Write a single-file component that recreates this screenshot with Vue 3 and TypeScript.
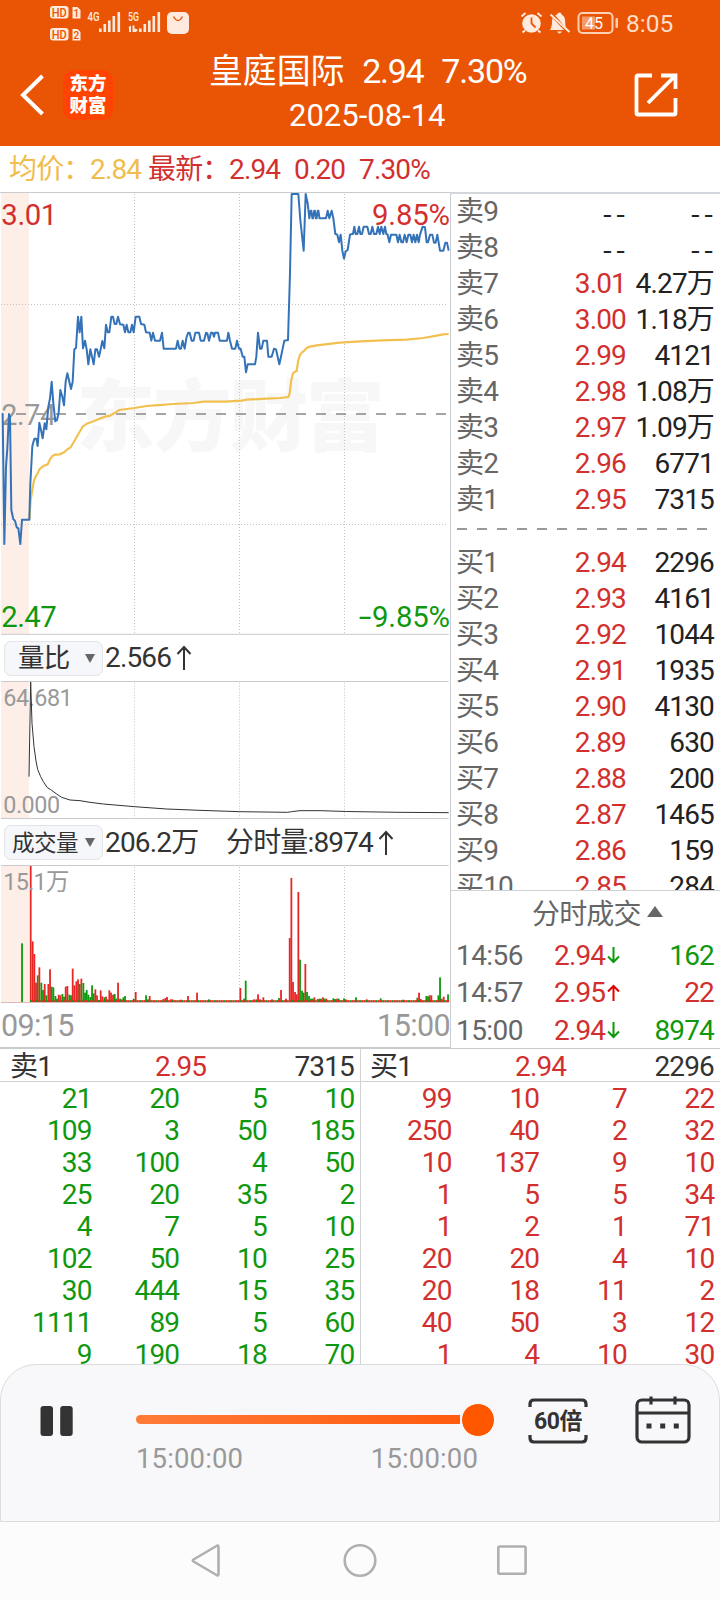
<script setup lang="ts">
type Quote = { label: string; price: string; volume: string }
type Bar = { x: number; h: number; c: string }

const RED = '#e82625'
const GREEN = '#0b9a0b'

const sells: Quote[] = [
  { label: '卖9', price: '--', volume: '--' },
  { label: '卖8', price: '--', volume: '--' },
  { label: '卖7', price: '3.01', volume: '4.27万' },
  { label: '卖6', price: '3.00', volume: '1.18万' },
  { label: '卖5', price: '2.99', volume: '4121' },
  { label: '卖4', price: '2.98', volume: '1.08万' },
  { label: '卖3', price: '2.97', volume: '1.09万' },
  { label: '卖2', price: '2.96', volume: '6771' },
  { label: '卖1', price: '2.95', volume: '7315' },
]
const buys: Quote[] = [
  { label: '买1', price: '2.94', volume: '2296' },
  { label: '买2', price: '2.93', volume: '4161' },
  { label: '买3', price: '2.92', volume: '1044' },
  { label: '买4', price: '2.91', volume: '1935' },
  { label: '买5', price: '2.90', volume: '4130' },
  { label: '买6', price: '2.89', volume: '630' },
  { label: '买7', price: '2.88', volume: '200' },
  { label: '买8', price: '2.87', volume: '1465' },
  { label: '买9', price: '2.86', volume: '159' },
  { label: '买10', price: '2.85', volume: '284' },
]
const ticks = [
  { time: '14:56', price: '2.94', up: false, vol: '162' },
  { time: '14:57', price: '2.95', up: true, vol: '22' },
  { time: '15:00', price: '2.94', up: false, vol: '8974' },
]
const queues = [
  {
    label: '卖1', price: '2.95', volume: '7315', tone: 'green',
    cells: [21, 20, 5, 10, 109, 3, 50, 185, 33, 100, 4, 50, 25, 20, 35, 2, 4, 7, 5, 10, 102, 50, 10, 25, 30, 444, 15, 35, 1111, 89, 5, 60, 9, 190, 18, 70],
  },
  {
    label: '买1', price: '2.94', volume: '2296', tone: 'red',
    cells: [99, 10, 7, 22, 250, 40, 2, 32, 10, 137, 9, 10, 1, 5, 5, 34, 1, 2, 1, 71, 20, 20, 4, 10, 20, 18, 11, 2, 40, 50, 3, 12, 1, 4, 10, 30],
  },
]

// Zigzag between two levels, used where the price flickers by one tick.
function flicker(from: number, to: number, hi: number, lo: number, step: number): string {
  const out: string[] = []
  let up = false
  for (let x = from; x <= to; x += step) {
    out.push(`${x},${up ? hi : lo}`, `${x + 2},${up ? hi : lo}`)
    up = !up
  }
  return out.join(' ')
}

const priceLine = [
  '5,672 8,672 13,1062 18,830 22,775 27,672 30,680 34,960 40,988 45,992 50,1012 55,1015 61,1062 66,989 88,989 91,880 97,768 103,746 109,746 113,768 118,698 123,720 128,745 134,700 139,718 145,650 150,625 155,575 160,640 166,694 171,690 176,668 181,600 187,620 192,646 197,575 202,550 208,575 213,597 218,575 223,478 228,474 234,380 239,427 244,380 249,475 255,452 260,478 265,523 271,478 276,500 281,523 286,478 291,478 297,500 302,478 307,453 313,475 318,404 323,427 328,427 334,380 339,380 344,402 349,402 354,380 360,403 370,404 375,427 380,404 385,427 391,427 396,404 401,427 407,380 418,380 423,402 433,404 438,427 449,428 454,452 459,428 465,452 480,452 486,428 491,476 528,476 533,452 538,476 543,476 548,452 554,476 560,440 565,428 569,428 575,452 581,452 586,428 597,428 602,452 612,452 618,428 622,430 627,452 633,428 638,428 642,440 645,428 654,428 659,452',
  '675,452 681,452 685,428 690,452 696,476 706,476 711,452 717,476 722,476 728,500 733,500 738,547 743,523 765,523 769,500 774,428 780,476 785,476 790,452 801,452 805,500 815,500 822,476 828,478 833,500 838,523 843,500 853,452 864,450 870,250 875,12 895,12 901,90 911,182 917,12 923,40 928,85',
  flicker(932, 960, 85, 62, 5.3),
  '965,85 978,85 983,62 988,85 995,62 1000,85 1006,132 1012,134 1017,157 1022,134 1027,182 1032,206 1037,184 1043,180 1050,134 1056,132',
  '1059,132 1063,110 1067,132 1072,132 1077,110 1081,132 1086,132 1091,110 1102,110 1107,132 1112,132 1117,110 1122,132 1129,132 1134,110 1139,132 1144,110 1150,132 1155,110 1159,132',
  '1163,134 1168,157 1173,134',
  '1189,134 1194,157 1199,134 1204,157 1209,157 1214,134 1220,157 1225,134 1231,134 1236,157 1241,134 1246,157 1251,134 1256,157',
  '1260,134 1268,110 1275,112 1280,157 1284,157 1290,134 1297,134 1302,158 1307,158 1312,134 1320,182 1330,182 1336,158 1341,158 1346,182',
].join(' ')

const avgLine =
  '88,990 92,930 97,900 102,872 108,858 113,850 118,838 130,828 143,823 150,808 157,798 165,794 180,793 192,787 202,778 212,772 225,750 235,732 248,710 260,701 275,696 295,688 315,680 330,677 345,668 358,660 380,657 403,654 440,648 465,646 520,642 580,639 610,635 675,635 725,632 740,629 800,626 840,624 865,621 869,610 874,570 879,550 885,545 890,543 895,510 900,495 905,488 912,483 920,474 930,470 950,466 975,463 1020,458 1080,454 1145,451 1220,449 1270,444 1310,437 1330,433 1346,432'

const volumeText =
  '66:176g 92:408r 98:182r 103:144r 108:58r 113:80g 118:104r 124:58g 129:36g 134:54r 139:20g 145:54r 150:98r 155:46g 160:44g 166:18g 171:10g 176:22r 181:20r 187:24g 192:16g 197:46r 202:48r 208:22g 213:20g 218:100r 223:50r 229:62r 234:68r 239:54g 244:70r 250:57g 255:28g 260:36g 265:22g 271:15g 276:50g 281:26g 286:38r 291:20r 297:6g 302:35r 307:17r 313:14g 318:16r 323:8g 328:35r 333:28r 339:22r 344:24g 349:10g 354:58r 360:10g 365:8r 370:14g 375:18g 401:10g 407:30r 438:20g 444:8g 449:18r 490:9r 496:12r 501:15r 512:8r 517:8r 543:7r 564:18r 591:28r 627:8g 721:42r 732:10g 737:64g 762:8r 769:8r 774:23r 780:8r 790:14r 816:8r 837:12g 843:36r 858:10r 869:192r 874:372r 879:60r 885:30r 890:23r 895:330r 900:127g 906:34g 911:28g 916:114r 921:30g 927:18g 933:10g 938:10g 943:14r 953:9g 958:10r 963:10g 969:14r 974:10g 979:10r 1000:11g 1005:9g 1011:10r 1016:10g 1032:11g 1037:8r 1068:14g 1100:8r 1142:11g 1210:7r 1252:13g 1257:28r 1262:9r 1279:18g 1284:17g 1289:20r 1294:20r 1315:20g 1320:74g 1325:10r 1331:16r 1344:23g'
const bars: Bar[] = volumeText.split(' ').map((s) => {
  const [x, rest] = s.split(':')
  return { x: Number(x), h: parseInt(rest), c: rest.endsWith('r') ? RED : GREEN }
})
for (let i = 0; i < 240; i++) {
  bars.push({ x: 92.5 + i * 5.24, h: 5.5, c: i % 3 === 0 ? GREEN : RED })
}
const verticals = [403.5, 718.5, 1033.5]
</script>

<template>
  <div class="screen">
    <header class="top">
      <div class="status">
        <svg class="status-left" width="150" height="36" viewBox="0 0 150 36">
          <g fill="#ffeadd">
            <rect x="0" y="0" width="18.500" height="12.500" rx="3" /><path d="M22.500 1h5l3 3v8.500h-8z" />
            <rect x="0" y="22" width="18.500" height="12.500" rx="3" /><path d="M22.500 23h5l3 3v8.500h-8z" />
            <path d="M49 22.500h2.600V26H49zM53.500 18h2.600v8h-2.600zM58 14.500h2.600V26H58zM62.500 10h2.600v16h-2.600zM67.500 6h2.600v20h-2.600z" />
            <path d="M89 22.500h2.600V26H89zM93.500 18h2.600v8h-2.600zM98 14.500h2.600V26H98zM102.500 10h2.600v16h-2.600zM107.500 6h2.600v20h-2.600z" />
            <path d="M78 21.500l3-2v6.500h-2v-4.500zM82.500 19.500h2v3l3 1v1.500l-2 1h-3z" />
            <rect x="117" y="6" width="22" height="22" rx="5" />
            <text x="37.500" y="14.500" font-size="12.500" textLength="12" lengthAdjust="spacingAndGlyphs" font-weight="500">4G</text>
            <text x="78" y="14.500" font-size="12.500" textLength="11" lengthAdjust="spacingAndGlyphs" font-weight="500">5G</text>
          </g>
          <g fill="#e95504" font-size="12" font-weight="500">
            <text x="1.800" y="10.600" textLength="15" lengthAdjust="spacingAndGlyphs">HD</text><text x="23.600" y="10.600" font-size="10">1</text>
            <text x="1.800" y="32.600" textLength="15" lengthAdjust="spacingAndGlyphs">HD</text><text x="23.600" y="32.600" font-size="10">2</text>
          </g>
          <path d="M123.500 10.500q4.500 8 9 0" fill="none" stroke="#e95504" stroke-width="1.300" />
        </svg>
        <svg class="status-right" width="100" height="26" viewBox="520 10 100 26">
          <circle cx="531.500" cy="23.500" r="9.300" fill="#ffeadd" />
          <path d="M531.500 17.500v6l4 4" fill="none" stroke="#e95504" stroke-width="1.800" />
          <path d="M521.500 16.500l4-3.500M541.500 16.500l-4-3.500M525 30.500l-2.500 2M538 30.500l2.500 2" stroke="#ffeadd" stroke-width="2" />
          <path d="M559.500 12.500c-1 0-2 .8-2 1.800l-2.300.9L566 28c-.6-2-.8-3.500-.8-6 0-4-1-6-3.700-7.500 0-1.200-1-2-2-2z M552.500 18c-.8 3.500 0 9-2.500 12h14zM557 31.500h5q-2.500 4-5 0z" fill="#ffeadd" />
          <path d="M550.500 14.500l19 17.500" stroke="#ffeadd" stroke-width="2" />
          <rect x="578.500" y="13" width="34" height="20" rx="4" fill="none" stroke="#ffcfb4" stroke-width="2" />
          <rect x="582" y="16.500" width="13" height="13" fill="#f79a68" />
          <rect x="615.500" y="18" width="2.500" height="10" rx="1" fill="#ffcfb4" />
          <text x="585" y="28.500" font-size="16.500" fill="#fff" textLength="18" lengthAdjust="spacingAndGlyphs">45</text>
        </svg>
        <span class="clock">8:05</span>
      </div>
      <div class="bar">
        <svg class="back" width="26" height="42" viewBox="0 0 26 42"><path d="M23.500 2L4 21l19.500 19" fill="none" stroke="#fff" stroke-width="4" /></svg>
        <div class="logo"><span>东方</span><span>财富</span></div>
        <div class="titles">
          <div class="name"><span>皇庭国际</span><span class="n1">2.94</span><span class="n2">7.30%</span></div>
          <div class="date">2025-08-14</div>
        </div>
        <svg class="share" width="44" height="44" viewBox="0 0 44 44">
          <g fill="none" stroke="#fff" stroke-width="3.800"><path d="M18 2.500H4Q2.500 2.500 2.500 4v36Q2.500 41.500 4 41.500h36q1.500 0 1.500-1.500V25" /><path d="M27 2.500h14.500V16M41 3L14 30" /></g>
        </svg>
      </div>
    </header>

    <div class="summary">
      <span class="yellow s1">均价：</span><span class="yellow s2">2.84</span>
      <span class="red s1">最新：</span><span class="red s3">2.94</span><span class="red s4">0.20</span><span class="red">7.30%</span>
    </div>

    <main class="market">
      <section class="charts">
        <svg width="450" height="443" viewBox="0 6 1350 1329">
          <rect x="3" y="9" width="84" height="1323" fill="#fdeee8" />
          <text class="mark" x="229" y="764" font-size="236" textLength="925">东方财富</text>
          <g class="dots">
            <path v-for="v in verticals" :key="v" :d="`M${v} 12V1332`" />
            <path d="M3 343.500H1342M3 1003.500H1342" />
          </g>
          <path d="M48 672H1346" stroke="#888" stroke-width="5" stroke-dasharray="30 30" />
          <text x="4" y="706" font-size="86" fill="#999" textLength="164">2.74</text>
          <polyline :points="avgLine" fill="none" stroke="#f2c04f" stroke-width="6.500" />
          <polyline :points="priceLine" fill="none" stroke="#3573b9" stroke-width="6" stroke-linejoin="round" />
          <path d="M0 7.500H1350M3 1333H1346" stroke="#c9cbcd" stroke-width="3" />
          <text x="4" y="104" font-size="88" fill="#d42f2f" textLength="168">3.01</text>
          <text x="1116" y="104" font-size="88" fill="#d42f2f" textLength="234">9.85%</text>
          <text x="4" y="1310" font-size="88" fill="#0f980f" textLength="166">2.47</text>
          <text x="1076" y="1310" font-size="88" fill="#0f980f"><tspan textLength="38" lengthAdjust="spacingAndGlyphs">-</tspan><tspan x="1116" textLength="234">9.85%</tspan></text>
        </svg>

        <div class="indicator">
          <div class="picker"><span class="wide">量比</span><i></i></div>
          <span>2.566</span>
          <svg class="arrow" width="16" height="26" viewBox="0 0 16 26"><path d="M8 25V2M1.500 9L8 2l6.500 7" fill="none" stroke="#333" stroke-width="2" /></svg>
        </div>

        <svg width="450" height="138" viewBox="0 153 1350 414">
          <rect x="3" y="156" width="84" height="408" fill="#fdeee8" />
          <g class="dots"><path v-for="v in verticals" :key="v" :d="`M${v} 158V564`" /></g>
          <path d="M3 154.500H1346M3 565.500H1346" stroke="#c9cbcd" stroke-width="3" />
          <text x="10" y="227" font-size="70" fill="#999" textLength="208">64.681</text>
          <text x="10" y="548" font-size="70" fill="#999" textLength="170">0.000</text>
          <path d="M87 440L92 156 96 280 102 350 108 393 113 418 122 440 130 455 142 473 152 479 170 492 185 502 210 510 240 512 270 517 310 522 403 530 500 537 600 541 718 545 862 547 875 545 900 542 960 542 1040 544.500 1200 547 1346 548" fill="none" stroke="#333" stroke-width="3" />
        </svg>

        <div class="indicator second">
          <div class="picker"><span class="tight">成交量</span><i></i></div>
          <span class="total">206.2万</span><span>分时量:8974</span>
          <svg class="arrow" width="16" height="26" viewBox="0 0 16 26"><path d="M8 25V2M1.500 9L8 2l6.500 7" fill="none" stroke="#333" stroke-width="2" /></svg>
        </div>

        <svg width="450" height="138" viewBox="0 30 1350 414">
          <rect x="3" y="33" width="84" height="408" fill="#fdeee8" />
          <g class="dots"><path v-for="v in verticals" :key="v" :d="`M${v} 36V440`" /></g>
          <path d="M3 31.500H1346" stroke="#c9cbcd" stroke-width="3" />
          <rect v-for="(b, i) in bars" :key="i" :x="b.x - 2.600" :y="441 - b.h" width="5.400" :height="b.h" :fill="b.c" />
          <path d="M3 442.500H1346" stroke="#c99" stroke-width="2" />
          <text x="10" y="104" font-size="70" fill="#999" textLength="198">15.1万</text>
        </svg>
        <div class="times"><span>09:15</span><span>15:00</span></div>
      </section>

      <aside class="book">
        <div class="ladder">
          <div v-for="q in sells" :key="q.label" class="quote" :class="{ empty: q.price === '--' }">
            <span>{{ q.label }}</span><b>{{ q.price }}</b><em>{{ q.volume }}</em>
          </div>
          <div class="split"></div>
          <div v-for="q in buys" :key="q.label" class="quote">
            <span>{{ q.label }}</span><b>{{ q.price }}</b><em>{{ q.volume }}</em>
          </div>
        </div>
        <div class="deals">
          <div class="deals-head">分时成交<i></i></div>
          <div v-for="t in ticks" :key="t.time" class="tick" :class="t.up ? 'up' : 'down'">
            <span>{{ t.time }}</span><b>{{ t.price }}</b>
            <svg width="13" height="18" viewBox="0 0 13 18">
              <path :d="t.up ? 'M6.500 17V2M1 7.500L6.500 2 12 7.500' : 'M6.500 0v15M1 9.500L6.500 15 12 9.500'" fill="none" :stroke="t.up ? '#e00000' : '#0b9a0b'" stroke-width="2" />
            </svg>
            <em>{{ t.vol }}</em>
          </div>
        </div>
      </aside>
    </main>

    <section class="queues">
      <div v-for="q in queues" :key="q.label" class="queue">
        <div class="queue-head"><span>{{ q.label }}</span><b>{{ q.price }}</b><em>{{ q.volume }}</em></div>
        <div class="cells" :class="q.tone"><span v-for="(c, i) in q.cells" :key="i">{{ c }}</span></div>
      </div>
    </section>

    <section class="player">
      <svg class="pause" width="34" height="30" viewBox="0 0 34 30"><rect x="0.500" width="12.500" height="30" rx="3" fill="#333" /><rect x="20.200" width="12.500" height="30" rx="3" fill="#333" /></svg>
      <div class="slider">
        <div class="track"><div class="knob"></div></div>
        <div class="range"><span>15:00:00</span><span>15:00:00</span></div>
      </div>
      <div class="speed">
        <svg width="60" height="46" viewBox="0 0 60 46"><path d="M2 9V6q0-4 4-4h48q4 0 4 4v3M2 37v3q0 4 4 4h48q4 0 4-4v-3" fill="none" stroke="#333" stroke-width="3.200" /></svg>
        <span>60倍</span>
      </div>
      <svg class="calendar" width="56" height="48" viewBox="0 0 56 48">
        <g fill="none" stroke="#333" stroke-width="3.200"><rect x="2" y="4" width="52" height="42" rx="5" /><path d="M2 17h52M16 0.500v8M40 0.500v8" /></g>
        <path d="M11.500 27.500h5v5h-5zM25.200 27.500h5v5h-5zM38.800 27.500h5v5h-5z" fill="#333" />
      </svg>
    </section>

    <nav class="nav">
      <svg width="340" height="36" viewBox="190 0 340 36">
        <g fill="none" stroke="#b0b0b0" stroke-width="2.600" stroke-linejoin="round">
          <path d="M193.500 16.500q-1.500 1 0 2l23 13.500q2 1 2-1V4q0-2-2-1z" />
          <circle cx="360" cy="17.500" r="15.300" />
          <rect x="498.300" y="3.500" width="27.300" height="27.300" rx="1.500" />
        </g>
      </svg>
    </nav>
  </div>
</template>

<style>
body { margin: 0; background: #fff; }
</style>

<style scoped>
.screen {
  width: 720px; height: 1600px; overflow: hidden; display: flex; flex-direction: column;
  background: #fff; color: #333;
  font-family: Roboto, "Noto Sans CJK SC", sans-serif;
  font-size: 28px; letter-spacing: -0.03em; line-height: 36px; white-space: nowrap;
}
.screen * { box-sizing: border-box; }
svg { display: block; flex: none; }
svg text { letter-spacing: 0; }
b, em, i { font-weight: 400; font-style: normal; }
.red { color: #d2302f; }
.green { color: #0f980f; }
.yellow { color: #f0bd4d; }

.top { height: 146px; background: #e95504; color: #fff; }
.status { height: 46px; display: flex; align-items: flex-start; padding-left: 50px; }
.status-left { margin-top: 6px; }
.status-right { margin: 10px 0 0 320px; }
.clock { margin: 6px 0 0 6px; font-size: 24.5px; color: #ffdcc8; letter-spacing: 0; }
.bar { height: 100px; display: flex; padding-left: 19px; }
.back { margin-top: 28px; }
.logo {
  width: 50px; height: 50px; margin: 24px 0 0 18px; border-radius: 11px; background: #ff4400;
  display: flex; flex-direction: column; align-items: center; justify-content: center;
  font-size: 18.500px; font-weight: 900; line-height: 22px; letter-spacing: 0;
}
.titles { width: 430px; display: flex; flex-direction: column; padding-left: 96px; }
.name { display: flex; font-size: 34px; line-height: 50px; letter-spacing: -0.005em; height: 51px; }
.n1 { margin-left: 18px; width: 79px; letter-spacing: -0.04em; }
.n2 { letter-spacing: -0.035em; }
.date { font-size: 31px; line-height: 38px; letter-spacing: 0; padding-left: 80px; }
.share { margin: 27px 0 0 91px; }

.summary { height: 46px; display: flex; align-items: center; padding: 2px 0 0 9px; line-height: 44px; }
.s1 { width: 81px; }
.s2 { width: 58px; }
.s3 { width: 65px; }
.s4 { width: 65px; }

.market { height: 856px; display: flex; }
.charts { width: 450px; display: flex; flex-direction: column; }
.mark { font-weight: 900; fill: #f7f7f7; }
.dots path { fill: none; stroke: #c4c4c4; stroke-width: 3; stroke-dasharray: 3 6; }
.indicator { height: 46px; display: flex; align-items: center; }
.second { padding-top: 1px; }
.picker {
  width: 99px; height: 35px; margin: 0 2px 0 4px; padding: 0 7px 0 7px; border: 1px solid #e2e4e8; border-radius: 7px;
  background: #f6f7fa; display: flex; align-items: center; justify-content: space-between;
}
.picker i { border: 5.500px solid transparent; border-top: 9px solid #666; border-bottom: 0; }
.wide { font-size: 26.500px; margin-left: 6px; }
.tight { font-size: 22.500px; letter-spacing: -0.02em; }
.arrow { margin-left: 5px; }
.total { width: 121px; }
.times { height: 45px; padding: 2px 0 0 1px; display: flex; justify-content: space-between; align-items: center; font-size: 30.500px; letter-spacing: -0.02em; color: #999; border-bottom: 1.500px solid #c9cbcd; }

.book { width: 270px; border-left: 1px solid #c9ccd0; border-top: 2px solid #d3d6dc; display: flex; flex-direction: column; }
.ladder { height: 697px; overflow: hidden; border-bottom: 1px solid #cfd1d3; }
.quote { height: 36px; display: grid; grid-template-columns: 80px 90px 1fr; padding: 0 6px 0 5px; color: #222; }
.quote span { color: #666; }
.quote b, .quote em { text-align: right; }
.quote b { color: #d2302f; }
.empty b { color: #222; }
.empty b, .empty em { font-family: "Noto Sans CJK SC", sans-serif; letter-spacing: 3.500px; margin-right: -3px; }
.split { height: 27px; margin: 0 13px 0 6px; background: repeating-linear-gradient(90deg, #999 0 10px, transparent 10px 20px) 0 10px / 100% 2px no-repeat; }
.deals { color: #666; }
.deals-head { height: 45px; padding-top: 3px; display: flex; align-items: center; padding-left: 81px; }
.deals-head i { margin: -6px 0 0 6px; border: 8px solid transparent; border-bottom: 11px solid #666; border-top: 0; }
.tick { height: 37.500px; display: grid; grid-template-columns: 98px 53px 14px 1fr; align-items: center; padding: 2px 6px 0 5px; }
.tick span { letter-spacing: -0.02em; }
.tick b { color: #d2302f; }
.tick em { text-align: right; }
.up em { color: #d2302f; }
.down em { color: #0f980f; }

.queues { height: 316px; display: flex; overflow: hidden; border-top: 1px solid #c9cbcd; }
.queue { width: 360px; }
.queue + .queue { box-shadow: inset 1px 0 #d0d2d4; }
.queue-head { height: 33px; line-height: 35px; border-bottom: 1px solid #cfd1d3; display: grid; grid-template-columns: 145px 100px 1fr; padding: 0 6px 0 10px; }
.queue-head b { color: #d2302f; }
.queue-head em { text-align: right; }
.cells { display: grid; grid-template-columns: repeat(4, 87.600px); padding-left: 4px; line-height: 32px; text-align: right; padding-top: 1px; }

.player {
  height: 158px; border: 1px solid #dcdcde; border-radius: 36px 36px 0 0; background: #f8f8fa;
  display: flex; align-items: flex-start; padding-left: 39px;
}
.pause { margin-top: 41px; }
.slider { width: 358px; margin: 50px 0 0 62px; }
.track { width: 324px; height: 9px; border-radius: 5px 0 0 5px; background: linear-gradient(90deg, #ff7a38, #ff5c0f); position: relative; }
.knob { position: absolute; right: -35px; top: -12px; width: 34px; height: 34px; border-radius: 50%; background: #ff5600; border: 1px solid #fff; }
.range { display: flex; justify-content: space-between; width: 342px; margin-top: 17px; font-size: 27.500px; color: #999; letter-spacing: 0.005em; }
.speed { margin: 33px 0 0 34px; display: grid; }
.speed > * { grid-area: 1 / 1; }
.speed span { font-size: 23px; font-weight: 700; line-height: 48px; height: 46px; text-align: center; letter-spacing: -0.02em; }
.calendar { margin: 31px 0 0 47px; }
.nav { flex: 1; background: #fcfcfc; padding: 21px 0 0 190px; }
</style>
